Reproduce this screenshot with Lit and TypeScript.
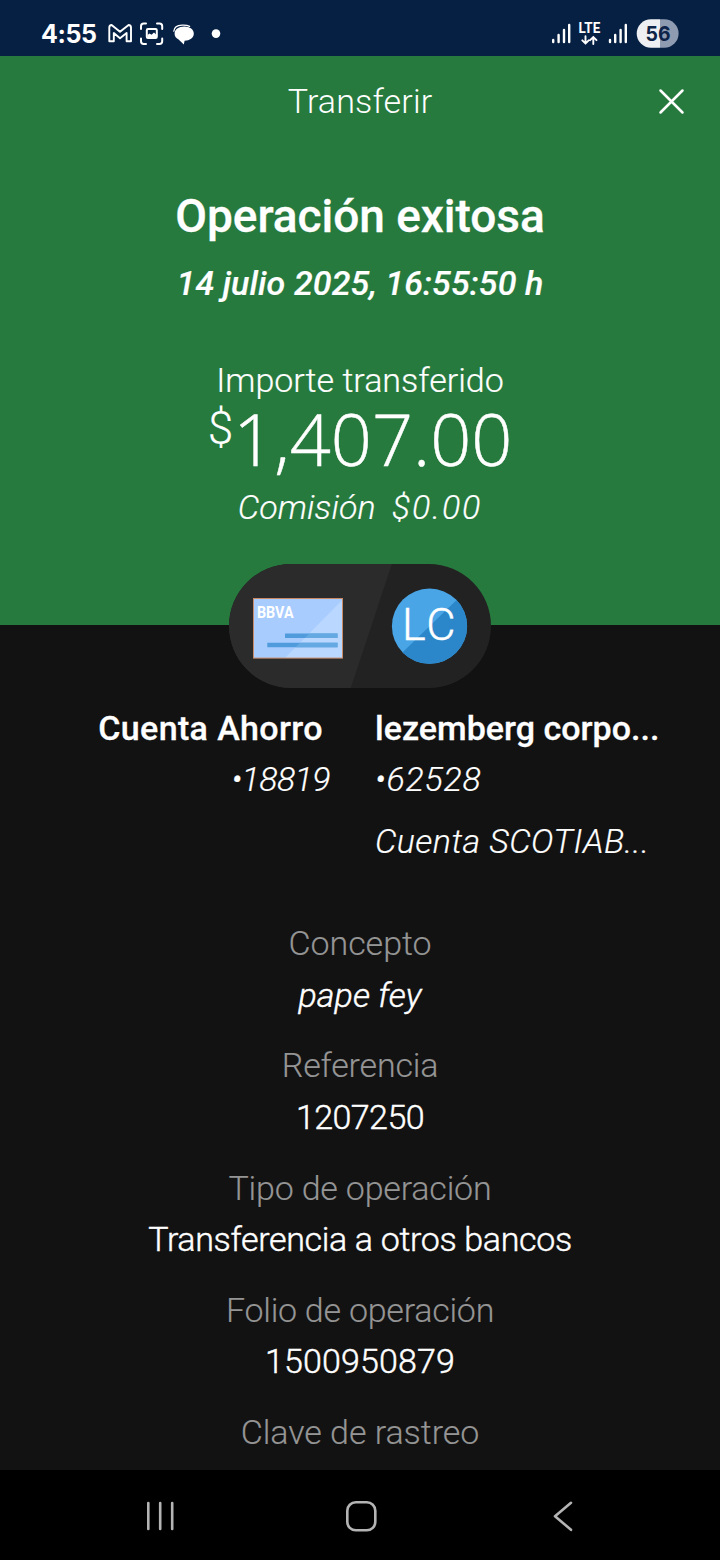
import { LitElement, html, css } from "lit";

interface Detail {
  label: string;
  labelClass: string;
  value?: string;
  valueClass?: string;
}

const details: Detail[] = [
  { label: "Concepto", labelClass: "s-zero", value: "pape fey", valueClass: "italic s-pape" },
  { label: "Referencia", labelClass: "s-refer", value: "1207250", valueClass: "s-ref" },
  { label: "Tipo de operación", labelClass: "s-tipo", value: "Transferencia a otros bancos", valueClass: "s-transf" },
  { label: "Folio de operación", labelClass: "s-folio-label", value: "1500950879", valueClass: "s-folio" },
  { label: "Clave de rastreo", labelClass: "s-zero" },
];

class StatusBar extends LitElement {
  static styles = css`
    :host {
      display: flex;
      justify-content: space-between;
      height: 56px;
      box-sizing: border-box;
      padding: 11px 41px 0 41px;
      background: #062044;
      color: #fff;
    }
    .left, .right { display: flex; align-items: center; height: 46px; }
    .time { font: 700 25px/46px Inter, sans-serif; letter-spacing: -0.4px; width: 66px; }
    svg { display: block; }
    .lte { font: 700 14px Roboto, sans-serif; fill: #fff; }
    .pct { font: 700 20.5px Inter, sans-serif; fill: #0d2348; }
  `;
  render() {
    return html`
      <div class="left">
        <span class="time">4:55</span>
        <svg width="120" height="46" viewBox="107 11 120 46" fill="none" stroke="#fff">
          <path d="M109.3 41.2V27.6Q109.3 25 111.6 25L120 31.8L128.6 25Q131 25 131 27.6V41.2H126.6V33L120 38.2L113.8 33V41.2Z" stroke-width="1.9" stroke-linejoin="round" />
          <path d="M141 29V26.3Q141 23.6 143.7 23.6H146M157 23.6H159.5Q162.2 23.6 162.2 26.3V29M162.2 38.5V41.2Q162.2 43.9 159.5 43.9H157M146 43.9H143.7Q141 43.9 141 41.2V38.5" stroke-width="2" stroke-linecap="round" />
          <rect x="146.8" y="29" width="10" height="9" rx="1.2" stroke-width="2" />
          <path d="M147.5 36.5V34.2L149.5 32.7L151.5 34L154 31.7L156.4 34V36.5Z" fill="#fff" stroke="none" transform="translate(0 .8)" />
          <path d="M173.8 31.2Q174.3 25.6 182 25.2Q187 25 189.6 26.4" stroke-width="1.3" stroke-linecap="round" />
          <path d="M184.3 26.6C190 26.6 193.8 29.6 193.8 33.7C193.8 37.6 189.6 40.6 184.6 40.7L183.8 44.4L178.6 39.4C175.8 38 174.6 36 174.6 33.7C174.6 29.6 178.6 26.6 184.3 26.6Z" fill="#fff" stroke="none" />
          <circle cx="216" cy="33.6" r="4.3" fill="#fff" stroke="none" />
        </svg>
      </div>
      <div class="right">
        <svg width="130" height="46" viewBox="549 11 130 46" fill="none" stroke="#fff">
          <path d="M553.2 40V42M558.6 35V42M564 30V42M569.2 25V42" stroke-width="2.4" stroke-linecap="round" />
          <text class="lte" x="578.6" y="33" stroke="none" textLength="21.6" lengthAdjust="spacingAndGlyphs">LTE</text>
          <path d="M585.5 36.3V43.3M582.3 40.3L585.5 43.5L588.7 40.3M593.3 44V37.2M590.1 40.2L593.3 37L596.5 40.2" stroke-width="1.9" stroke-linecap="round" />
          <path d="M610 40V42M615.2 35V42M620.6 30V42M625.8 25V42" stroke-width="2.4" stroke-linecap="round" />
          <path d="M651 19.2H660V47.8H651A14.3 14.3 0 0 1 651 19.2Z" fill="#eeeff3" stroke="none" />
          <path d="M660 19.2H664.3A14.3 14.3 0 0 1 664.3 47.8H660Z" fill="#8f9bb0" stroke="none" />
          <text class="pct" x="645.5" y="41" stroke="none" textLength="25" lengthAdjust="spacingAndGlyphs">56</text>
        </svg>
      </div>`;
  }
}
customElements.define("status-bar", StatusBar);

class TransferPill extends LitElement {
  static styles = css`
    :host { display: block; width: 262px; height: 124px; }
    svg { display: block; }
    .brand { font: 700 17px Roboto, sans-serif; fill: #fff; }
    .initials { font: 300 45px Roboto, sans-serif; fill: #fff; stroke: #fff; stroke-width: 0.4px; }
  `;
  render() {
    return html`
      <svg width="262" height="124" viewBox="229 564.3 262 124">
        <defs>
          <clipPath id="pill"><rect x="229" y="564.3" width="262" height="124" rx="62" /></clipPath>
          <clipPath id="disc"><circle cx="429.5" cy="626.5" r="37.6" /></clipPath>
        </defs>
        <g clip-path="url(#pill)">
          <rect x="229" y="564" width="262" height="125" fill="#222" />
          <path d="M229 564H392L350.5 689H229Z" fill="#2b2b2b" />
        </g>
        <rect x="253.5" y="598.8" width="89" height="59.6" fill="#a9ccff" />
        <path d="M342.5 599V658.4H285L342.5 600Z" fill="#b9d7ff" />
        <path d="M285 633.8H337.5V638.3H285ZM267.3 643H337.5V647.6H267.3Z" fill="#4f9bdc" />
        <path d="M309.4 633.8H337.5V638.3H304.8ZM300 643H337.5V647.6H295.6Z" fill="#64a9e2" />
        <rect x="253.5" y="598.8" width="89" height="59.6" fill="none" stroke="#c98a66" />
        <text class="brand" x="257" y="618.2" textLength="36.5" lengthAdjust="spacingAndGlyphs">BBVA</text>
        <g clip-path="url(#disc)">
          <rect x="391" y="588" width="78" height="78" fill="#49a5e6" />
          <path d="M461 596L398 657V670H470V596Z" fill="#2b87ca" />
        </g>
        <text class="initials" x="402" y="640.8" textLength="53.5">LC</text>
      </svg>`;
  }
}
customElements.define("transfer-pill", TransferPill);

class AppRoot extends LitElement {
  static styles = css`
    :host {
      display: flex;
      flex-direction: column;
      width: 720px;
      height: 1560px;
      overflow: hidden;
      background: #121212;
      color: #fff;
      font: 300 34px/40px Roboto, sans-serif;
      white-space: nowrap;
    }
    .hero {
      display: flex;
      flex-direction: column;
      align-items: center;
      height: 568.5px;
      background: #277a3e;
      flex: none;
    }
    .bar {
      display: grid;
      grid-template-columns: 1fr auto 1fr;
      align-items: center;
      width: 100%;
      height: 90px;
      margin-bottom: 40px;
    }
    .bar .name { grid-column: 2; letter-spacing: 0.16px; }
    .bar svg { grid-column: 3; justify-self: end; margin-right: 34px; }
    .title { font-size: 46px; font-weight: 500; line-height: 60px; letter-spacing: -0.05px; -webkit-text-stroke: 0.3px; }
    .date { font-style: italic; font-weight: 500; letter-spacing: 0.12px; margin: 17px 0 57px; -webkit-text-stroke: 0.2px; }
    .caption { letter-spacing: 0; -webkit-text-stroke: 0.2px; }
    .amount { display: flex; height: 72px; margin: 5px 0 10px; -webkit-text-stroke: 0.5px; }
    .currency { font-size: 46px; line-height: 46px; -webkit-text-stroke: 0.1px; }
    .figure { font: 300 72px/67px "Open Sans", sans-serif; letter-spacing: 0; }
    .fee { display: flex; gap: 16px; font-style: italic; letter-spacing: 0.1px; -webkit-text-stroke: 0.2px; }
    .fee .price { letter-spacing: 1.9px; }
    transfer-pill { align-self: center; margin-top: -60.5px; flex: none; }
    .accounts { display: grid; grid-template-columns: 330px 315px; column-gap: 45px; margin-top: 20px; }
    .from { text-align: right; }
    .strong { font-weight: 500; margin-bottom: 11px; -webkit-text-stroke: 0.3px; }
    .from .strong { letter-spacing: 0.37px; padding-right: 7px; }
    .to .strong { letter-spacing: 0.02px; }
    .sub, .bank { font-style: italic; -webkit-text-stroke: 0.2px; }
    .from .sub { letter-spacing: -0.6px; }
    .to .sub { letter-spacing: 0.75px; }
    .bank { letter-spacing: 0.42px; margin-top: 22px; }
    .details {
      flex: 1 1 0;
      min-height: 0;
      display: flex;
      flex-direction: column;
      align-items: center;
      gap: 18.3px;
      margin-top: 56px;
      line-height: 52px;
      text-align: center;
    }
    .label { color: #959595; -webkit-text-stroke: 0.15px; }
    .value { -webkit-text-stroke: 0.45px; position: relative; top: -0.5px; }
    .italic { font-style: italic; }
    .s-pape { letter-spacing: 0.05px; }
    .s-zero { letter-spacing: -0.06px; }
    .s-refer { letter-spacing: -0.2px; }
    .s-ref { letter-spacing: -0.6px; }
    .s-tipo { letter-spacing: -0.2px; }
    .s-folio-label { letter-spacing: -0.25px; }
    .s-transf { letter-spacing: -0.35px; }
    .s-folio { letter-spacing: 0.15px; }
    nav { height: 90px; flex: none; background: #000; }
    svg { display: block; }
  `;

  render() {
    return html`
      <status-bar></status-bar>
      <section class="hero">
        <header class="bar">
          <span class="name">Transferir</span>
          <svg width="30" height="30" viewBox="656 86.5 30 30" fill="none" stroke="#fff" stroke-width="2.5" stroke-linecap="round">
            <path d="M660.5 91L682.5 113M682.5 91L660.5 113" />
          </svg>
        </header>
        <div class="title">Operación exitosa</div>
        <div class="date">14 julio 2025, 16:55:50 h</div>
        <div class="caption">Importe transferido</div>
        <div class="amount"><span class="currency">$</span><span class="figure">1,407.00</span></div>
        <div class="fee"><span>Comisión</span><span class="price">$0.00</span></div>
      </section>
      <transfer-pill></transfer-pill>
      <section class="accounts">
        <div class="from">
          <div class="strong">Cuenta Ahorro</div>
          <div class="sub">•18819</div>
        </div>
        <div class="to">
          <div class="strong">lezemberg corpo...</div>
          <div class="sub">•62528</div>
          <div class="bank">Cuenta SCOTIAB...</div>
        </div>
      </section>
      <section class="details">
        ${details.map((d) => html`
          <div>
            <div class="label ${d.labelClass}">${d.label}</div>
            ${d.value ? html`<div class="value ${d.valueClass}">${d.value}</div>` : null}
          </div>`)}
      </section>
      <nav>
        <svg width="720" height="90" viewBox="0 1470 720 90" fill="none" stroke="#b4b4b4" stroke-width="2.6" stroke-linecap="round" stroke-linejoin="round">
          <path d="M148.3 1503V1529M160.2 1503V1529M172.2 1503V1529" />
          <rect x="347.3" y="1502.3" width="28" height="28" rx="8.5" />
          <path d="M571 1502.8L555 1516.2L571 1529.8" />
        </svg>
      </nav>`;
  }
}
customElements.define("app-root", AppRoot);
